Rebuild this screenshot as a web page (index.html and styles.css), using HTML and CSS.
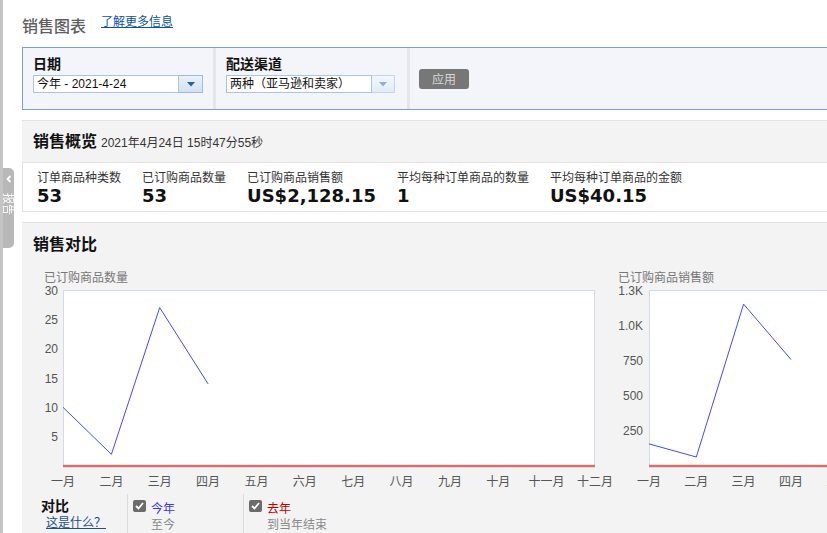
FILE: index.html
```html
<!DOCTYPE html>
<html lang="zh-CN">
<head>
<meta charset="utf-8">
<title>销售图表</title>
<link rel="stylesheet" href="styles.css">
</head>
<body>
<div class="edge"></div>
<div class="side-tab">
  <svg class="chev" width="6" height="8" viewBox="0 0 6 8"><path d="M4.5 1 L1.5 4 L4.5 7" fill="none" stroke="#fff" stroke-width="1.8"/></svg>
  <span class="tab-text">报告</span>
</div>
<main class="page">
  <header class="page-head">
    <h1 class="page-title">销售图表</h1>
    <a class="more-link" href="#">了解更多信息</a>
  </header>

  <section class="filters">
    <div class="filter filter-date">
      <div class="filter-label">日期</div>
      <div class="select">
        <span class="select-value">今年 - 2021-4-24</span>
        <span class="select-btn"><svg width="8" height="5" viewBox="0 0 8 5"><path d="M0 0 H8 L4 4.5 Z" fill="#2f5f99"/></svg></span>
      </div>
    </div>
    <div class="filter filter-channel">
      <div class="filter-label">配送渠道</div>
      <div class="select select-dim">
        <span class="select-value">两种（亚马逊和卖家）</span>
        <span class="select-btn"><svg width="8" height="5" viewBox="0 0 8 5"><path d="M0 0 H8 L4 4.5 Z" fill="#8fb0d4"/></svg></span>
      </div>
    </div>
    <div class="filter filter-action">
      <button class="apply-btn" type="button">应用</button>
    </div>
  </section>

  <section class="summary">
    <div class="summary-head">
      <h2 class="panel-title">销售概览</h2>
      <span class="stamp">2021年4月24日 15时47分55秒</span>
    </div>
    <div class="metrics">
      <div class="metric"><div class="metric-label">订单商品种类数</div><div class="metric-value">53</div></div>
      <div class="metric"><div class="metric-label">已订购商品数量</div><div class="metric-value">53</div></div>
      <div class="metric"><div class="metric-label">已订购商品销售额</div><div class="metric-value">US$2,128.15</div></div>
      <div class="metric"><div class="metric-label">平均每种订单商品的数量</div><div class="metric-value">1</div></div>
      <div class="metric"><div class="metric-label">平均每种订单商品的金额</div><div class="metric-value">US$40.15</div></div>
    </div>
  </section>

  <section class="compare">
    <h2 class="panel-title">销售对比</h2>
    <div class="charts">
      <div class="chart chart-qty">
        <div class="chart-title">已订购商品数量</div>
        <svg class="chart-svg" width="574" height="210" viewBox="0 0 574 210">
          <rect x="19.5" y="5.5" width="531" height="176" fill="#fff" stroke="#d3dbe6"/>
          <line x1="19" y1="181" x2="551" y2="181" stroke="#d66f6f" stroke-width="2.5"/>
          <polyline points="19,122.3 67.4,169.3 115.7,22.6 164.1,98.9" fill="none" stroke="#4747ff" stroke-width="1"/>
          <g class="ylab" text-anchor="end">
            <text x="14" y="9.5">30</text>
            <text x="14" y="38.8">25</text>
            <text x="14" y="68.2">20</text>
            <text x="14" y="97.5">15</text>
            <text x="14" y="126.8">10</text>
            <text x="14" y="156.2">5</text>
          </g>
          <g class="xlab" text-anchor="middle">
            <text x="19" y="201">一月</text>
            <text x="67.4" y="201">二月</text>
            <text x="115.7" y="201">三月</text>
            <text x="164.1" y="201">四月</text>
            <text x="212.4" y="201">五月</text>
            <text x="260.8" y="201">六月</text>
            <text x="309.2" y="201">七月</text>
            <text x="357.5" y="201">八月</text>
            <text x="405.9" y="201">九月</text>
            <text x="454.2" y="201">十月</text>
            <text x="502.6" y="201">十一月</text>
            <text x="551" y="201">十二月</text>
          </g>
        </svg>
      </div>
      <div class="chart chart-amt">
        <div class="chart-title">已订购商品销售额</div>
        <svg class="chart-svg" width="260" height="210" viewBox="0 0 260 210">
          <rect x="31.5" y="5.5" width="600" height="176" fill="#fff" stroke="#d3dbe6"/>
          <line x1="31" y1="181" x2="260" y2="181" stroke="#d66f6f" stroke-width="2.5"/>
          <polyline points="31,158.9 78.3,172 125.6,19.1 172.9,74.4" fill="none" stroke="#4747ff" stroke-width="1"/>
          <g class="ylab" text-anchor="end">
            <text x="25" y="9.5">1.3K</text>
            <text x="25" y="44.7">1.0K</text>
            <text x="25" y="79.9">750</text>
            <text x="25" y="115.1">500</text>
            <text x="25" y="150.3">250</text>
          </g>
          <g class="xlab" text-anchor="middle">
            <text x="31" y="201">一月</text>
            <text x="78.3" y="201">二月</text>
            <text x="125.6" y="201">三月</text>
            <text x="172.9" y="201">四月</text>
            <text x="220.2" y="201">五月</text>
          </g>
        </svg>
      </div>
    </div>
    <div class="legend">
      <div class="legend-item legend-head">
        <div class="legend-title">对比</div>
        <a class="legend-link" href="#">这是什么？</a>
      </div>
      <div class="legend-item legend-series">
        <div class="series-row">
          <span class="check"><svg width="9" height="8" viewBox="0 0 9 8"><path d="M1 4 L3.5 6.5 L8 1" fill="none" stroke="#fff" stroke-width="1.8"/></svg></span>
          <span class="series-name series-now">今年</span>
        </div>
        <div class="series-sub">至今</div>
      </div>
      <div class="legend-item legend-series">
        <div class="series-row">
          <span class="check"><svg width="9" height="8" viewBox="0 0 9 8"><path d="M1 4 L3.5 6.5 L8 1" fill="none" stroke="#fff" stroke-width="1.8"/></svg></span>
          <span class="series-name series-last">去年</span>
        </div>
        <div class="series-sub">到当年结束</div>
      </div>
    </div>
  </section>
</main>
</body>
</html>
```

FILE: styles.css
```css
html, body {
  margin: 0;
  padding: 0;
  background: #fff;
  overflow: hidden;
}

body {
  font-family: "Noto Sans CJK SC", "Liberation Sans", sans-serif;
  color: #222;
  font-size: 12px;
  line-height: 16px;
}

.edge {
  position: fixed;
  left: 0;
  top: 0;
  bottom: 0;
  width: 3px;
  background: #c4c4c4;
}

.side-tab {
  position: fixed;
  left: 3px;
  top: 168px;
  width: 11px;
  height: 80px;
  background: #b8b8b8;
  border-radius: 0 5px 5px 0;
  display: flex;
  flex-direction: column;
  align-items: center;
  padding-top: 7px;
  box-sizing: border-box;
  gap: 10px;
}

.chev {
  display: block;
}

.tab-text {
  writing-mode: vertical-rl;
  text-orientation: sideways;
  color: #fff;
  font-size: 11px;
  line-height: 11px;
}

.page {
  width: 900px;
  padding-left: 22px;
}

.page-head {
  height: 47px;
  box-sizing: border-box;
  padding-top: 13px;
  display: flex;
  align-items: flex-start;
  gap: 15px;
}

.page-title {
  margin: 0;
  font-size: 16px;
  line-height: 24px;
  font-weight: 500;
  color: #5e5e5e;
}

.more-link {
  font-size: 12px;
  line-height: 16px;
  color: #0b54a4;
  text-decoration: underline;
}

.filters {
  display: flex;
  border: 1px solid #7d9fcb;
  background: #f4f5fa;
  height: 63px;
  box-sizing: border-box;
}

.filter {
  box-sizing: border-box;
  padding: 6px 10px 0 10px;
}

.filter-date {
  flex: 0 0 193px;
  border-right: 3px solid #e5e6eb;
}

.filter-channel {
  flex: 0 0 194px;
  border-right: 3px solid #e5e6eb;
}

.filter-label {
  font-size: 14px;
  line-height: 18px;
  font-weight: bold;
  color: #111;
  margin-bottom: 3px;
}

.select {
  display: flex;
  height: 18px;
}

.select-value {
  box-sizing: border-box;
  width: 146px;
  height: 18px;
  border: 1px solid #a9c5e5;
  background: #fff;
  font-family: "Liberation Sans", "Noto Sans CJK SC", sans-serif;
  font-size: 12px;
  line-height: 16px;
  padding-left: 3px;
  color: #111;
  white-space: nowrap;
  overflow: hidden;
}

.select-btn {
  box-sizing: border-box;
  width: 24px;
  height: 18px;
  border: 1px solid #98bde0;
  border-left: none;
  background: linear-gradient(#e9f1fb, #d2e2f3);
  display: flex;
  align-items: center;
  justify-content: center;
}

.select-dim .select-btn {
  width: 23px;
  border-color: #c3d7ec;
  background: linear-gradient(#f1f6fc, #e2ecf7);
}

.filter-action {
  padding: 0 0 0 9px;
  display: flex;
  align-items: center;
}

.apply-btn {
  width: 50px;
  height: 20px;
  border: none;
  border-radius: 3px;
  background: #777;
  color: #d6d6d6;
  font-family: "Noto Sans CJK SC", sans-serif;
  font-size: 12px;
  line-height: 16px;
  padding: 0;
}

.summary {
  margin-top: 10px;
}

.summary-head {
  height: 42px;
  box-sizing: border-box;
  border-top: 1px solid #e3e3e3;
  background: #f3f3f3;
  padding: 9px 0 0 11px;
  display: flex;
  align-items: baseline;
  gap: 4px;
}

.panel-title {
  margin: 0;
  font-size: 16px;
  line-height: 20px;
  font-weight: bold;
  color: #111;
}

.stamp {
  font-family: "Liberation Sans", "Noto Sans CJK SC", sans-serif;
  font-size: 12px;
  line-height: 16px;
  color: #333;
}

.metrics {
  display: flex;
  gap: 21px;
  background: #fff;
  border: 1px solid #e2e2e2;
  padding: 6px 14px 4px 14px;
}

.metric {
  min-width: 84px;
}

.metric-label {
  font-size: 12px;
  line-height: 16px;
  color: #333;
  white-space: nowrap;
}

.metric-value {
  font-family: "DejaVu Sans", "Liberation Sans", sans-serif;
  font-weight: bold;
  font-size: 18px;
  line-height: 22px;
  color: #111;
  white-space: nowrap;
}

.compare {
  margin-top: 10px;
  border-top: 1px solid #e3e3e3;
  background: #f3f3f3;
  padding: 10px 0 0 11px;
  min-height: 320px;
}

.charts {
  display: flex;
  margin-top: 16px;
  margin-left: 11px;
}

.chart {
  flex: 0 0 auto;
}

.chart-title {
  font-size: 12px;
  line-height: 16px;
  color: #777;
}

.chart-svg {
  display: block;
}

.ylab {
  font-family: "Liberation Sans", sans-serif;
  font-size: 12px;
  fill: #555;
}

.xlab {
  font-family: "Noto Sans CJK SC", sans-serif;
  font-size: 12px;
  fill: #555;
}

.legend {
  display: flex;
  margin-top: -1px;
}

.legend-item {
  box-sizing: border-box;
  min-height: 40px;
}

.legend-head {
  width: 94px;
  padding: 2px 0 0 8px;
}

.legend-title {
  font-size: 14px;
  line-height: 18px;
  font-weight: bold;
  color: #111;
}

.legend-link {
  display: inline-block;
  margin-left: 5px;
  font-size: 12px;
  line-height: 16px;
  color: #1b4f8e;
  text-decoration: underline;
}

.legend-series {
  width: 116px;
  border-left: 1px solid #dcdcdc;
  padding: 6px 0 0 5px;
}

.series-row {
  display: flex;
  align-items: flex-start;
  gap: 5px;
}

.check {
  width: 13px;
  height: 12px;
  border-radius: 2px;
  background: #6b6b6b;
  display: flex;
  align-items: center;
  justify-content: center;
}

.series-name {
  font-size: 12px;
  line-height: 16px;
}

.series-now {
  color: #3a3af5;
}

.series-last {
  color: #c40000;
}

.series-sub {
  padding-left: 18px;
  font-size: 12px;
  line-height: 16px;
  color: #8a8a8a;
}
```
